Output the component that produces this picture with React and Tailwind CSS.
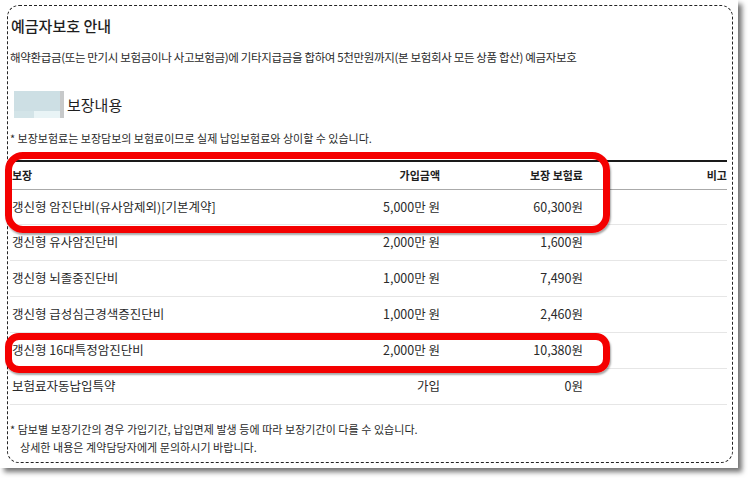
const rows = [
  { name: "갱신형 암진단비(유사암제외)[기본계약]", amount: "5,000만 원", premium: "60,300원", h: "h-[35px]" },
  { name: "갱신형 유사암진단비", amount: "2,000만 원", premium: "1,600원", h: "h-[36px]" },
  { name: "갱신형 뇌졸중진단비", amount: "1,000만 원", premium: "7,490원", h: "h-[36px]" },
  { name: "갱신형 급성심근경색증진단비", amount: "1,000만 원", premium: "2,460원", h: "h-[36px]" },
  { name: "갱신형 16대특정암진단비", amount: "2,000만 원", premium: "10,380원", h: "h-[36px]" },
  { name: "보험료자동납입특약", amount: "가입", premium: "0원", h: "h-[36px]" },
];

export default function App() {
  return (
    <div className="w-[748px] h-[478px] bg-white font-['Noto_Sans_CJK_KR','Noto_Sans',sans-serif] text-[#2a2a2a]">
      <div className="relative w-[738px] h-[468px] bg-white shadow-[4px_4px_5px_rgba(0,0,0,0.55)] pt-[5px] pl-[7px]">
        <div className="w-[726px] h-[458px] border border-dashed border-[#222] rounded-[12px] pl-[2px] pt-[10px]">
          <h2 className="h-[20px] leading-[20px] text-[15px] font-medium text-[#1e1e1e] pl-[1px]">
            예금자보호 안내
          </h2>
          <p className="mt-[12px] h-[18px] leading-[18px] text-[11.5px] tracking-[-0.35px]">
            해약환급금(또는 만기시 보험금이나 사고보험금)에 기타지급금을 합하여 5천만원까지(본 보험회사 모든 상품 합산) 예금자보호
          </p>

          <div className="mt-[25px] h-[27px] flex items-center">
            <div className="ml-[4px] w-[50px] h-[27px] flex blur-[0.6px]">
              <div className="flex-1 flex flex-col">
                <div className="flex-1 bg-[#cddfe4]" />
                <div className="h-[7px] flex">
                  <div className="w-[20px] bg-[#d3e4e8]" />
                  <div className="flex-1 bg-[#e9f4f6]" />
                </div>
              </div>
              <div className="w-[4px] bg-[#c7c9ca]" />
            </div>
            <span className="ml-[3px] text-[15px] leading-[20px] text-[#1e1e1e]">보장내용</span>
          </div>

          <p className="mt-[12px] h-[16px] leading-[16px] text-[11px]">
            * 보장보험료는 보장담보의 보험료이므로 실제 납입보험료와 상이할 수 있습니다.
          </p>

          <div className="mt-[14px] w-[717px] text-[12.5px]">
            <div className="grid grid-cols-[1fr_140px_143px_144px] h-[30px] items-center border-t-2 border-b border-t-[#1a1a1a] border-b-[#aaa] font-bold text-[11px] text-[#1e1e1e]">
              <div className="pl-[2px]">보장</div>
              <div className="text-right">가입금액</div>
              <div className="text-right">보장 보험료</div>
              <div className="text-right">비고</div>
            </div>
            {rows.map((r) => (
              <div
                key={r.name}
                className={`grid grid-cols-[1fr_140px_143px_144px] ${r.h} items-center border-b border-[#e6e6e6]`}
              >
                <div className="pl-[2px]">{r.name}</div>
                <div className="text-right">{r.amount}</div>
                <div className="text-right">{r.premium}</div>
                <div />
              </div>
            ))}
          </div>

          <div className="mt-[15px] text-[11px] leading-[18px] tracking-[0.05px]">
            <p>* 담보별 보장기간의 경우 가입기간, 납입면제 발생 등에 따라 보장기간이 다를 수 있습니다.</p>
            <p className="pl-[10px]">상세한 내용은 계약담당자에게 문의하시기 바랍니다.</p>
          </div>
        </div>

        <div className="absolute left-[5px] top-[152px] w-[605px] h-[81px] border-[7px] border-[#f40000] rounded-[18px] shadow-[1px_2px_2px_rgba(0,0,0,0.35)]" />
        <div className="absolute left-[5px] top-[333px] w-[605px] h-[40px] border-[7px] border-[#f40000] rounded-[14px] shadow-[1px_2px_2px_rgba(0,0,0,0.35)]" />
      </div>
    </div>
  );
}
